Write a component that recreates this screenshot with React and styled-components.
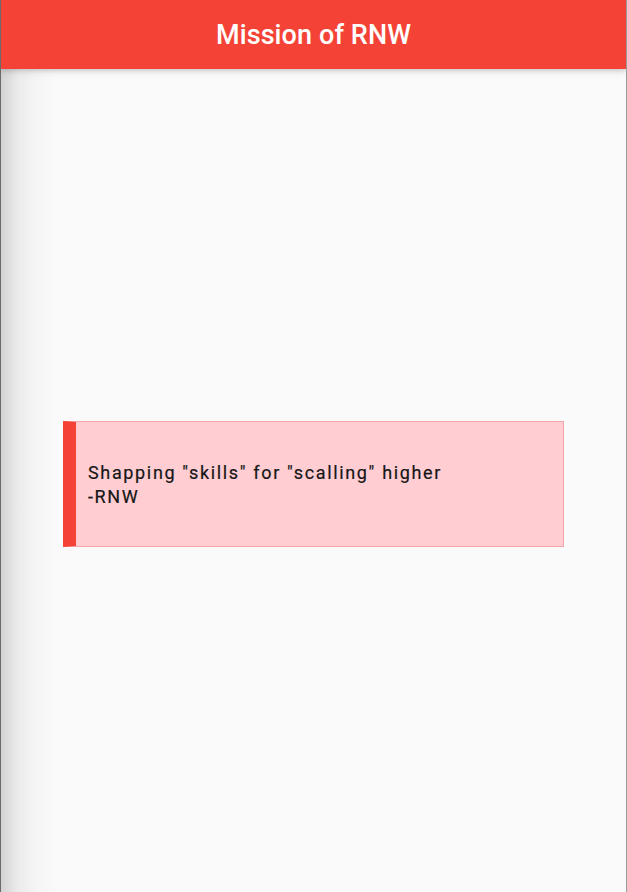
import React from 'react';
import styled, { createGlobalStyle } from 'styled-components';

const GlobalStyle = createGlobalStyle`
  html, body {
    margin: 0;
    padding: 0;
    background: #fafafa;
  }
  body {
    font-family: Roboto, "Noto Sans", sans-serif;
  }
`;

const Screen = styled.div`
  position: relative;
  width: 627px;
  height: 892px;
  display: flex;
  flex-direction: column;
  background: #fafafa;
  border-left: 1px solid #6b6b6b;
  border-right: 1px solid #9a9a9a;
  box-sizing: border-box;
  overflow: hidden;

  &::after {
    content: '';
    position: absolute;
    top: 0;
    left: 0;
    bottom: 0;
    width: 56px;
    pointer-events: none;
    background: linear-gradient(
      to right,
      rgba(0, 0, 0, 0.16),
      rgba(0, 0, 0, 0.06) 30%,
      rgba(0, 0, 0, 0.02) 65%,
      rgba(0, 0, 0, 0)
    );
  }
`;

const AppBar = styled.header`
  height: 69px;
  flex-shrink: 0;
  display: flex;
  align-items: center;
  justify-content: center;
  background: #f44336;
  box-shadow: 0 2px 4px rgba(0, 0, 0, 0.14), 0 4px 8px rgba(0, 0, 0, 0.06);
  z-index: 1;
`;

const Title = styled.h1`
  margin: 0;
  color: #fff;
  font-family: Roboto, sans-serif;
  font-weight: 500;
  font-size: 27px;
  letter-spacing: 0.1px;
`;

const Body = styled.main`
  flex: 1;
  display: flex;
  align-items: center;
  justify-content: center;
  padding-top: 7px;
`;

const Quote = styled.div`
  width: 501px;
  height: 126px;
  box-sizing: border-box;
  display: flex;
  align-items: center;
  background: #ffcdd2;
  border: 1px solid #f5a7ab;
  border-left: 13px solid #f44336;
  padding-left: 12px;
`;

const QuoteText = styled.p`
  margin: 0;
  padding-top: 1px;
  color: #161616;
  font-family: Roboto, sans-serif;
  font-size: 18px;
  line-height: 24px;
  letter-spacing: 1.65px;
  -webkit-text-stroke: 0.2px #161616;
`;

export default function App() {
  return (
    <>
      <GlobalStyle />
      <Screen>
        <AppBar>
          <Title>Mission of RNW</Title>
        </AppBar>
        <Body>
          <Quote>
            <QuoteText>
              Shapping "skills" for "scalling" higher
              <br />
              -RNW
            </QuoteText>
          </Quote>
        </Body>
      </Screen>
    </>
  );
}
